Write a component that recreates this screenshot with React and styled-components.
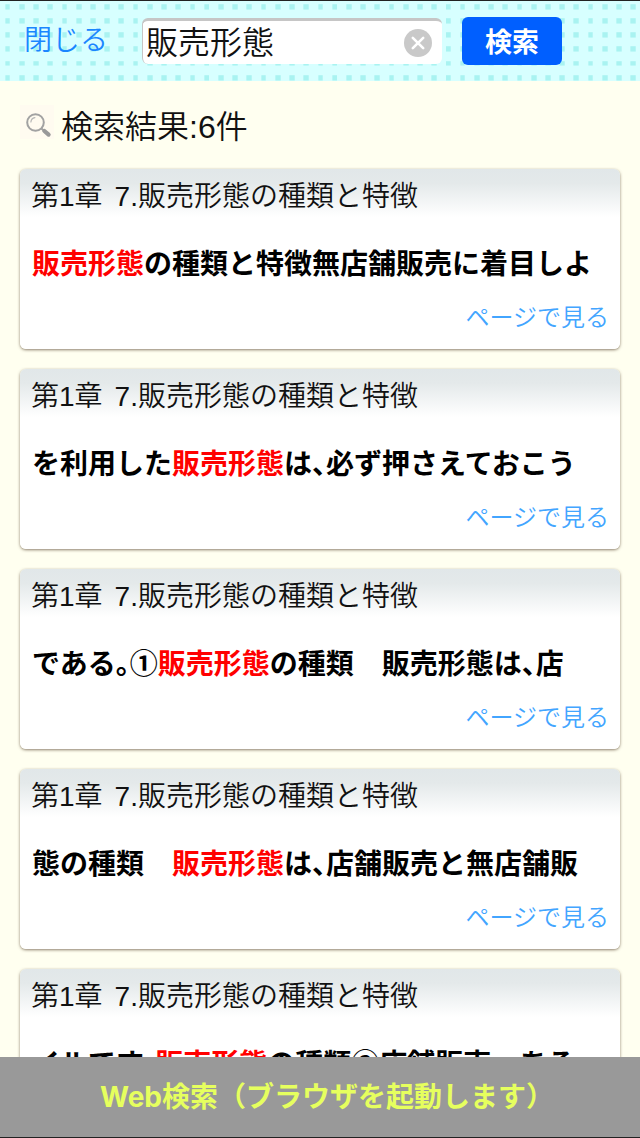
import { useState } from "react";
import { createGlobalStyle, styled } from "styled-components";

const GlobalStyle = createGlobalStyle`
  * {
    box-sizing: border-box;
  }
  body {
    margin: 0;
    background-color: #fffff0;
    font-family: "Liberation Sans", "Noto Sans CJK JP", sans-serif;
    color: #111;
  }
`

const Page = styled.div`
  height: 100vh;
  display: flex;
  flex-direction: column;
  border-top: 1px solid #222;
  border-bottom: 1px solid #222;
`

const Header = styled.header`
  flex-shrink: 0;
  height: 80px;
  padding: 0 24px;
  display: flex;
  align-items: center;
  background-color: #d7ffff;
  background-image: url("data:image/svg+xml,%3Csvg xmlns='http://www.w3.org/2000/svg' viewBox='0 0 14 14'%3E%3Crect x='5' y='3' width='5' height='5' fill='%23a9f3f1'/%3E%3C/svg%3E");
  background-size: calc(100% / 45) auto;
`

const CloseButton = styled.button`
  width: 118px;
  padding: 0;
  border: none;
  background: none;
  font-family: inherit;
  font-size: 28px;
  font-weight: 350;
  line-height: 40px;
  text-align: left;
  color: #1a86ff;
`

const SearchForm = styled.form`
  flex: 1;
  display: flex;
  align-items: center;
  gap: 20px;
`

const SearchField = styled.div`
  width: 300px;
  height: 46px;
  padding: 0 10px 0 3px;
  display: flex;
  align-items: center;
  border-top: 3px solid #c6c6c6;
  border-left: 1px solid #c6c6c6;
  border-radius: 6px;
  background-color: white;
  input {
    flex: 1;
    min-width: 0;
    padding: 0;
    border: none;
    outline: none;
    background: none;
    font-family: inherit;
    font-size: 32px;
    font-weight: 350;
    line-height: 40px;
    color: #111;
  }
`

const ClearButton = styled.button`
  width: 28px;
  height: 28px;
  padding: 0;
  border: none;
  background: none;
  svg {
    display: block;
  }
`

const SearchButton = styled.button`
  width: 100px;
  height: 48px;
  padding: 3px 0 0;
  border: none;
  border-radius: 6px;
  background-color: #005fff;
  font-family: inherit;
  font-size: 27px;
  font-weight: bold;
  line-height: 40px;
  color: white;
`

const Results = styled.main`
  flex: 1;
  min-height: 0;
  overflow-y: auto;
  scrollbar-width: none;
  padding: 24px 20px;
`

const ResultCount = styled.h1`
  margin: 0 0 20px;
  display: flex;
  align-items: flex-start;
  gap: 7px;
  font-size: 32px;
  font-weight: 350;
  line-height: 44px;
  svg {
    background-color: #fffbf0;
  }
`

const CardList = styled.ul`
  margin: 0;
  padding: 0;
  display: flex;
  flex-direction: column;
  gap: 20px;
  list-style: none;
`

const Card = styled.li`
  height: 180px;
  padding: 8px 11px;
  border-radius: 6px;
  background: linear-gradient(#e1e7e9, #e4e9ea 14px, #fff 48px);
  box-shadow: 0 1px 3px rgba(90, 70, 50, 0.7);
`

const Chapter = styled.h2`
  margin: 0 0 25px;
  display: flex;
  gap: 12px;
  font-size: 28px;
  font-weight: 350;
  line-height: 40px;
  white-space: nowrap;
`

const Snippet = styled.p`
  margin: 0 0 16px;
  padding-left: 1px;
  font-family: "Noto Sans CJK JP", sans-serif;
  font-size: 28px;
  font-weight: bold;
  line-height: 40px;
  /* half-width punctuation */
  font-feature-settings: "halt";
  white-space: nowrap;
  color: black;
`

const Hit = styled.em`
  font-style: normal;
  color: #ff0000;
`

const PageLink = styled.a`
  display: block;
  text-align: right;
  font-size: 24px;
  font-weight: 350;
  line-height: 40px;
  text-decoration: none;
  color: #42a5ff;
`

const WebSearch = styled.button`
  flex-shrink: 0;
  height: 80px;
  padding: 0;
  border: none;
  background-color: #999;
  font-family: Inter, "Noto Sans CJK JP", sans-serif;
  font-size: 28px;
  font-weight: bold;
  line-height: 40px;
  color: #e6ff5e;
`

const HalfWidth = styled.span`
  font-feature-settings: "halt";
`

const results = [
  { id: 1, before: "", after: "の種類と特徴無店舗販売に着目しよ" },
  { id: 2, before: "を利用した", after: "は、必ず押さえておこう" },
  { id: 3, before: "である。①", after: "の種類　販売形態は、店" },
  { id: 4, before: "態の種類　", after: "は、店舗販売と無店舗販" },
  { id: 5, before: "イルです。", after: "の種類②店舗販売　ある" },
]

const ClearIcon = () => (
  <svg width="28" height="28" viewBox="0 0 28 28" aria-hidden="true">
    <circle cx="14" cy="14" r="14" fill="#c9c9c9" />
    <path d="M8.8 8.8l10.4 10.4M19.2 8.8L8.8 19.2" stroke="#fff" strokeWidth="2.6" strokeLinecap="round" />
  </svg>
)

const SearchIcon = () => (
  <svg width="34" height="34" viewBox="0 0 34 34" fill="none" aria-hidden="true">
    <circle cx="15.5" cy="17.5" r="8.3" stroke="#a2a2a2" strokeWidth="2" />
    <path d="M10.9 17a4.8 4.8 0 0 1 4-4.3" stroke="#b5b5b5" strokeWidth="1.2" strokeLinecap="round" />
    <path d="M21.4 23.4l2.2 2" stroke="#a2a2a2" strokeWidth="2" />
    <path d="M24.4 26l4.2 3.6" stroke="#999" strokeWidth="4.2" strokeLinecap="round" />
  </svg>
)

const App = () => {
  const [keyword, setKeyword] = useState("販売形態")

  return (
    <Page>
      <GlobalStyle />
      <Header>
        <CloseButton type="button">閉じる</CloseButton>
        <SearchForm onSubmit={(e) => e.preventDefault()}>
          <SearchField>
            <input
              type="text"
              aria-label="検索"
              value={keyword}
              onChange={(e) => setKeyword(e.target.value)}
            />
            <ClearButton type="button" aria-label="クリア" onClick={() => setKeyword("")}>
              <ClearIcon />
            </ClearButton>
          </SearchField>
          <SearchButton type="submit">検索</SearchButton>
        </SearchForm>
      </Header>

      <Results>
        <ResultCount>
          <SearchIcon />
          検索結果:6件
        </ResultCount>
        <CardList>
          {results.map((item) => (
            <Card key={item.id}>
              <Chapter>
                <span>第1章</span>
                <span>7.販売形態の種類と特徴</span>
              </Chapter>
              <Snippet>
                {item.before}
                <Hit>販売形態</Hit>
                {item.after}
              </Snippet>
              <PageLink href="#">ページで見る</PageLink>
            </Card>
          ))}
        </CardList>
      </Results>

      <WebSearch type="button">
        Web検索（ブラウザを起動します<HalfWidth>）</HalfWidth>
      </WebSearch>
    </Page>
  )
}

export default App;
